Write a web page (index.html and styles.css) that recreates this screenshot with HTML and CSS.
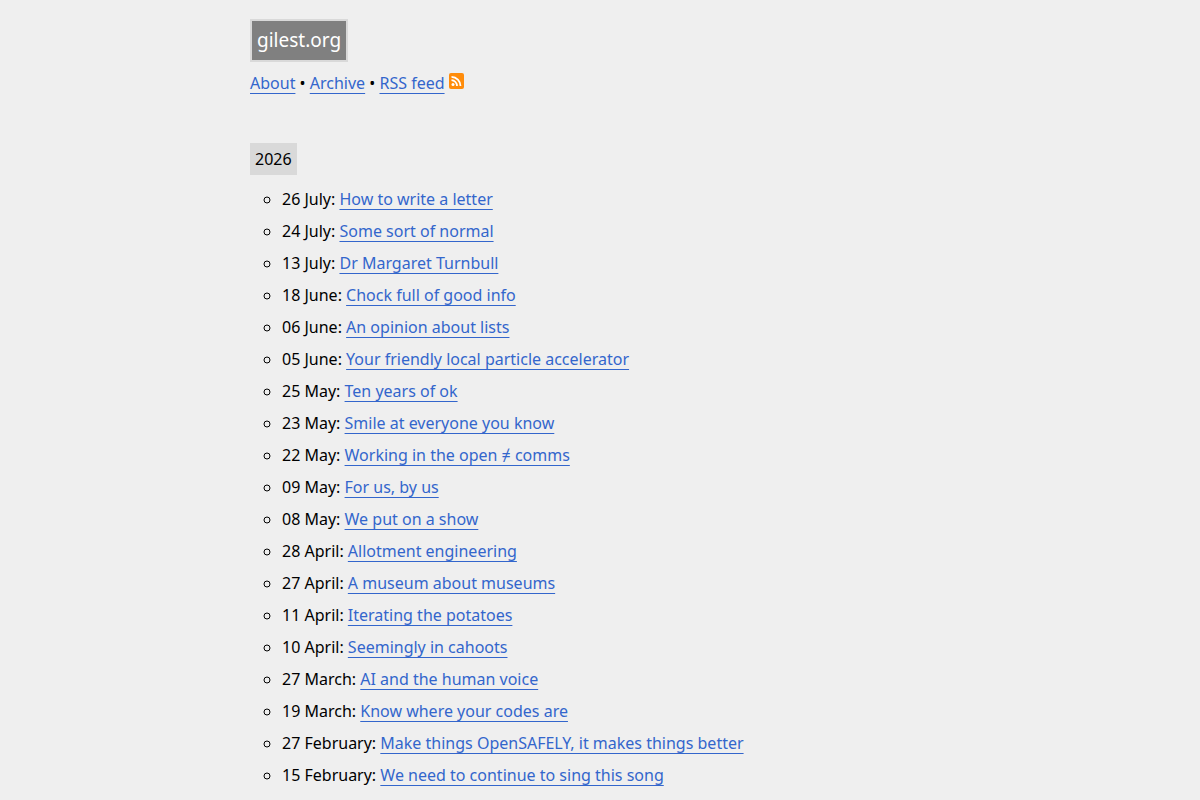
FILE: index.html
```html
<!DOCTYPE html>
<html lang="en">
<head>
    <meta charset="UTF-8">
    <meta name="viewport" content="width=device-width, initial-scale=1.0">
    <title>gilest.org</title>
    <link rel="stylesheet" href="styles.css">
</head>
<body>
    <header>
        <a class="site-title" href="/">gilest.org</a>
        <nav>
            <a href="/about">About</a> •
            <a href="/archive">Archive</a> •
            <a href="/feed.xml">RSS feed</a>
            <svg class="rss-icon" viewBox="0 0 15 16" aria-hidden="true">
                <rect width="15" height="16" rx="2" fill="#ff8c0a"/>
                <circle cx="4" cy="11.500" r="1.500" fill="#fff"/>
                <path d="M2.500 7.200a5.800 5.800 0 0 1 5.500 5.800M2.500 3.800a9.200 9.200 0 0 1 9 9.200" fill="none" stroke="#fff" stroke-width="1.800"/>
            </svg>
        </nav>
    </header>
    <main>
        <h2>2026</h2>
        <ul class="posts">
            <li>26 July: <a href="/how-to-write-a-letter">How to write a letter</a></li>
            <li>24 July: <a href="/some-sort-of-normal">Some sort of normal</a></li>
            <li>13 July: <a href="/dr-margaret-turnbull">Dr Margaret Turnbull</a></li>
            <li>18 June: <a href="/chock-full-of-good-info">Chock full of good info</a></li>
            <li>06 June: <a href="/an-opinion-about-lists">An opinion about lists</a></li>
            <li>05 June: <a href="/particle-accelerator">Your friendly local particle accelerator</a></li>
            <li>25 May: <a href="/ten-years-of-ok">Ten years of ok</a></li>
            <li>23 May: <a href="/smile">Smile at everyone you know</a></li>
            <li>22 May: <a href="/working-in-the-open">Working in the open ≠ comms</a></li>
            <li>09 May: <a href="/for-us-by-us">For us, by us</a></li>
            <li>08 May: <a href="/we-put-on-a-show">We put on a show</a></li>
            <li>28 April: <a href="/allotment-engineering">Allotment engineering</a></li>
            <li>27 April: <a href="/museums">A museum about museums</a></li>
            <li>11 April: <a href="/potatoes">Iterating the potatoes</a></li>
            <li>10 April: <a href="/cahoots">Seemingly in cahoots</a></li>
            <li>27 March: <a href="/ai-and-the-human-voice">AI and the human voice</a></li>
            <li>19 March: <a href="/codes">Know where your codes are</a></li>
            <li>27 February: <a href="/opensafely">Make things OpenSAFELY, it makes things better</a></li>
            <li>15 February: <a href="/sing-this-song">We need to continue to sing this song</a></li>
        </ul>
    </main>
</body>
</html>
```
FILE: styles.css
```css
body {
    font-family: "Noto Sans", sans-serif;
    font-size: 16px;
    line-height: 32px;
    max-width: 700px;
    margin: 0 auto;
    padding: 19px 20px 0;
    color: #000;
    background-color: #efefef;
}
a {
    color: #36c;
    text-decoration: underline 1px #36c;
    text-decoration-skip-ink: none;
    text-underline-offset: 4px;
}
.site-title {
    display: inline-block;
    padding: 3px 5px 4px;
    font-size: 19px;
    color: #fff;
    text-decoration: none;
    background-color: #808080;
    border: 2px solid #d9d9d9;
}
nav {
    margin-top: 5px;
}
.rss-icon {
    width: 15px;
    height: 16px;
}
h2 {
    width: fit-content;
    margin: 44px 0 8px;
    padding: 0 5px;
    font-size: 16px;
    font-weight: normal;
    background-color: #d9d9d9;
}
.posts {
    margin: 0;
    padding-left: 32px;
    list-style-type: circle;
}
```
